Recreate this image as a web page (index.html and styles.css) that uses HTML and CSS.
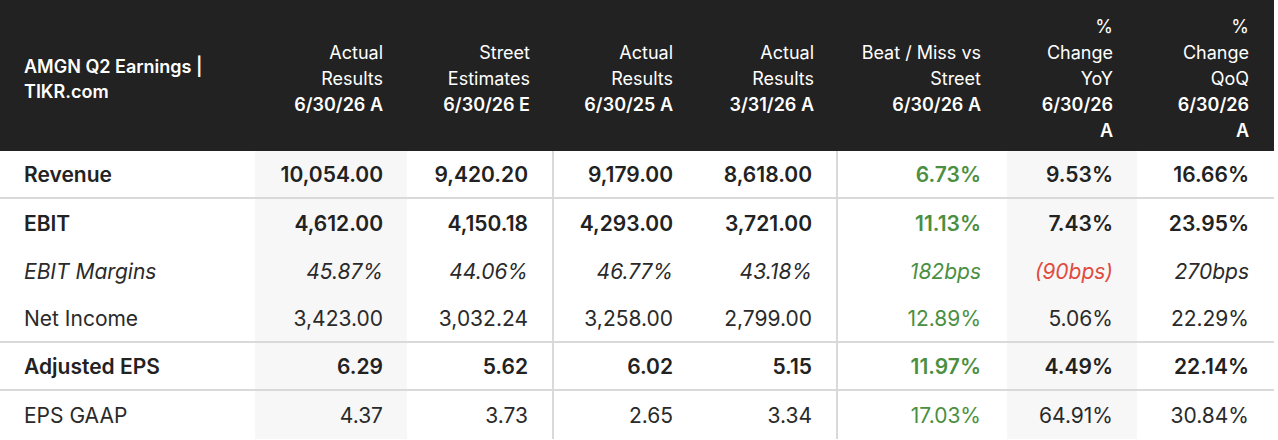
FILE: index.html
```html
<!DOCTYPE html>
<html lang="en">
<head>
<meta charset="utf-8">
<title>AMGN Q2 Earnings | TIKR.com</title>
<link rel="stylesheet" href="styles.css">
</head>
<body>
<table class="earnings">
  <colgroup>
    <col class="w-label">
    <col class="w-c1">
    <col class="w-c2">
    <col class="w-c3">
    <col class="w-c4">
    <col class="w-c5">
    <col class="w-c6">
    <col class="w-c7">
  </colgroup>
  <thead>
    <tr>
      <th class="title">AMGN Q2 Earnings |<br>TIKR.com</th>
      <th>Actual<br>Results<br><b>6/30/26 A</b></th>
      <th>Street<br>Estimates<br><b>6/30/26 E</b></th>
      <th>Actual<br>Results<br><b>6/30/25 A</b></th>
      <th>Actual<br>Results<br><b>3/31/26 A</b></th>
      <th class="beat">Beat / Miss vs<br>Street<br><b>6/30/26 A</b></th>
      <th class="narrow">%<br>Change<br>YoY<br><b>6/30/26<br>A</b></th>
      <th class="last">%<br>Change<br>QoQ<br><b>6/30/26<br>A</b></th>
    </tr>
  </thead>
  <tbody>
    <tr class="strong sep">
      <td class="label">Revenue</td>
      <td class="shade">10,054.00</td>
      <td class="divider">9,420.20</td>
      <td>9,179.00</td>
      <td class="divider">8,618.00</td>
      <td class="beat pos">6.73%</td>
      <td class="shade narrow">9.53%</td>
      <td class="last">16.66%</td>
    </tr>
    <tr class="strong">
      <td class="label">EBIT</td>
      <td class="shade">4,612.00</td>
      <td class="divider">4,150.18</td>
      <td>4,293.00</td>
      <td class="divider">3,721.00</td>
      <td class="beat pos">11.13%</td>
      <td class="shade narrow">7.43%</td>
      <td class="last">23.95%</td>
    </tr>
    <tr class="ital">
      <td class="label">EBIT Margins</td>
      <td class="shade">45.87%</td>
      <td class="divider">44.06%</td>
      <td>46.77%</td>
      <td class="divider">43.18%</td>
      <td class="beat pos">182bps</td>
      <td class="shade narrow neg">(90bps)</td>
      <td class="last">270bps</td>
    </tr>
    <tr class="sep">
      <td class="label">Net Income</td>
      <td class="shade">3,423.00</td>
      <td class="divider">3,032.24</td>
      <td>3,258.00</td>
      <td class="divider">2,799.00</td>
      <td class="beat pos">12.89%</td>
      <td class="shade narrow">5.06%</td>
      <td class="last">22.29%</td>
    </tr>
    <tr class="strong sep">
      <td class="label">Adjusted EPS</td>
      <td class="shade">6.29</td>
      <td class="divider">5.62</td>
      <td>6.02</td>
      <td class="divider">5.15</td>
      <td class="beat pos">11.97%</td>
      <td class="shade narrow">4.49%</td>
      <td class="last">22.14%</td>
    </tr>
    <tr>
      <td class="label">EPS GAAP</td>
      <td class="shade">4.37</td>
      <td class="divider">3.73</td>
      <td>2.65</td>
      <td class="divider">3.34</td>
      <td class="beat pos">17.03%</td>
      <td class="shade narrow">64.91%</td>
      <td class="last">30.84%</td>
    </tr>
  </tbody>
</table>
</body>
</html>
```

FILE: styles.css
```css
html, body {
  margin: 0;
  padding: 0;
  background: #ffffff;
}

body {
  font-family: "Inter", "Liberation Sans", sans-serif;
  color: #222222;
}

.earnings {
  width: 1274px;
  table-layout: fixed;
  border-collapse: separate;
  border-spacing: 0;
}

.w-label { width: 255px; }
.w-c1 { width: 152px; }
.w-c2 { width: 147px; }
.w-c3 { width: 143px; }
.w-c4 { width: 141px; }
.w-c5 { width: 169px; }
.w-c6 { width: 130px; }
.w-c7 { width: 137px; }

.earnings th {
  background: #222222;
  color: #ffffff;
  height: 151px;
  box-sizing: border-box;
  padding: 14px 24px 7px 0;
  text-align: right;
  vertical-align: middle;
  font-size: 18px;
  line-height: 26px;
  font-weight: 400;
}

.earnings th b {
  font-weight: 600;
}

.earnings th.title {
  text-align: left;
  padding-left: 24px;
  font-weight: 600;
  line-height: 25px;
}

.earnings th.beat,
.earnings td.beat {
  padding-right: 26px;
}

.earnings th.narrow,
.earnings td.narrow {
  padding-right: 24px;
}

.earnings th.last,
.earnings td.last {
  padding-right: 25px;
}

.earnings td {
  height: 48px;
  box-sizing: border-box;
  padding: 0 24px 0 0;
  text-align: right;
  vertical-align: middle;
  font-size: 21px;
  font-weight: 400;
  color: #2a2a2a;
  white-space: nowrap;
}

.earnings td.label {
  text-align: left;
  padding-left: 24px;
}

.earnings td.shade {
  background: #f7f7f7;
}

.earnings td.divider {
  border-right: 2px solid #d9d9d9;
  padding-right: 24px;
}

.earnings tr.sep td {
  border-bottom: 2px solid #d9d9d9;
}

.earnings tr.strong td {
  font-weight: 600;
  color: #222222;
}

.earnings tr.ital td {
  font-style: italic;
}

.earnings tr td.pos {
  color: #4b8f42;
}

.earnings tr td.neg {
  color: #e04b40;
}
```
